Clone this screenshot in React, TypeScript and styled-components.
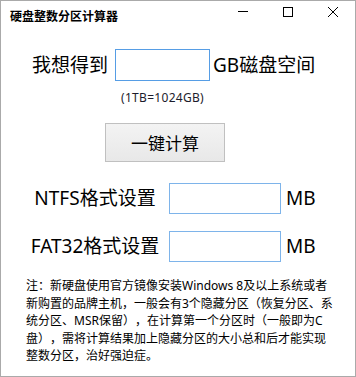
import React from 'react';
import styled, { createGlobalStyle } from 'styled-components';

const GlobalStyle = createGlobalStyle`
  html, body {
    margin: 0;
    padding: 0;
    background: #fff;
  }
  body {
    font-family: "Noto Sans", "Noto Sans CJK SC", sans-serif;
    color: #000;
  }
`;

const Window = styled.div`
  width: 356px;
  height: 377px;
  box-sizing: border-box;
  border: 1px solid #aaaaaa;
  background: #fff;
  display: flex;
  flex-direction: column;
  overflow: hidden;
`;

const TitleBar = styled.div`
  height: 30px;
  flex-shrink: 0;
  display: flex;
  justify-content: space-between;
`;

const Title = styled.div`
  align-self: center;
  padding-left: 9px;
  font-family: "Noto Sans CJK SC", sans-serif;
  font-size: 12px;
  font-weight: 700;
  line-height: 16px;
`;

const Controls = styled.div`
  display: flex;
  align-self: flex-start;
`;

const CtrlButton = styled.div`
  width: 45px;
  height: 22px;
  display: flex;
  align-items: center;
  justify-content: center;
`;

const Content = styled.div`
  display: flex;
  flex-direction: column;
  padding-top: 18px;
`;

const SizeRow = styled.div`
  display: flex;
  align-items: flex-start;
  padding-left: 31px;
`;

const BigText = styled.span`
  font-size: 19px;
  line-height: 32px;
  white-space: nowrap;
`;

const InputColumn = styled.div`
  display: flex;
  flex-direction: column;
  align-items: center;
  margin: 0 3px 0 7px;
`;

const TextBox = styled.div<{ $w: number; $h: number; $focus?: boolean }>`
  width: ${(p) => p.$w}px;
  height: ${(p) => p.$h}px;
  box-sizing: border-box;
  border: 1px solid ${(p) => (p.$focus ? '#569de5' : '#7eb4ea')};
  background: #fff;
`;

const Hint = styled.div`
  margin-top: 9px;
  font-size: 12px;
  letter-spacing: 0.3px;
  line-height: 16px;
  color: #1c1c2c;
  white-space: nowrap;
`;

const ActionRow = styled.div`
  display: flex;
  padding-left: 104px;
  margin-top: 17px;
`;

const ActionButton = styled.div`
  width: 120px;
  height: 39px;
  box-sizing: border-box;
  border: 1px solid #c0c0c0;
  background: linear-gradient(#f3f3f3, #e8e8e8);
  display: flex;
  align-items: center;
  justify-content: center;
  font-family: "Noto Sans CJK SC", sans-serif;
  font-size: 17px;
`;

const SettingRow = styled.div<{ $top: number }>`
  display: flex;
  align-items: center;
  padding-left: 26px;
  margin-top: ${(p) => p.$top}px;
`;

const SettingLabel = styled.div`
  width: 136px;
  margin-right: 6px;
  text-align: center;
  font-size: 19px;
  line-height: 31px;
  white-space: nowrap;
`;

const Unit = styled.span`
  margin-left: 5px;
  font-size: 19px;
  line-height: 31px;
`;

const Note = styled.div`
  margin-top: 15px;
  padding-left: 25px;
  font-size: 12px;
  line-height: 17.6px;
  white-space: nowrap;
  text-spacing-trim: space-all;
`;

function WinIcon({ kind }: { kind: 'min' | 'max' | 'close' }) {
  return (
    <svg width="10" height="10" viewBox="0 0 10 10" fill="none" stroke="#000" strokeWidth="1">
      {kind === 'min' && <line x1="0" y1="4.5" x2="10" y2="4.5" />}
      {kind === 'max' && <rect x="0.5" y="0.5" width="9" height="9" />}
      {kind === 'close' && (
        <>
          <line x1="0" y1="0" x2="10" y2="10" />
          <line x1="10" y1="0" x2="0" y2="10" />
        </>
      )}
    </svg>
  );
}

export default function App() {
  return (
    <>
      <GlobalStyle />
      <Window>
        <TitleBar>
          <Title>硬盘整数分区计算器</Title>
          <Controls>
            <CtrlButton><WinIcon kind="min" /></CtrlButton>
            <CtrlButton><WinIcon kind="max" /></CtrlButton>
            <CtrlButton><WinIcon kind="close" /></CtrlButton>
          </Controls>
        </TitleBar>
        <Content>
          <SizeRow>
            <BigText>我想得到</BigText>
            <InputColumn>
              <TextBox $w={95} $h={32} $focus />
              <Hint>(1TB=1024GB)</Hint>
            </InputColumn>
            <BigText>GB磁盘空间</BigText>
          </SizeRow>
          <ActionRow>
            <ActionButton>一键计算</ActionButton>
          </ActionRow>
          <SettingRow $top={21}>
            <SettingLabel>NTFS格式设置</SettingLabel>
            <TextBox $w={112} $h={31} />
            <Unit>MB</Unit>
          </SettingRow>
          <SettingRow $top={17}>
            <SettingLabel>FAT32格式设置</SettingLabel>
            <TextBox $w={112} $h={31} />
            <Unit>MB</Unit>
          </SettingRow>
          <Note>
            注：新硬盘使用官方镜像安装Windows 8及以上系统或者
            <br />
            新购置的品牌主机，一般会有3个隐藏分区（恢复分区、系
            <br />
            统分区、MSR保留），在计算第一个分区时（一般即为C
            <br />
            盘），需将计算结果加上隐藏分区的大小总和后才能实现
            <br />
            整数分区，治好强迫症。
          </Note>
        </Content>
      </Window>
    </>
  );
}
